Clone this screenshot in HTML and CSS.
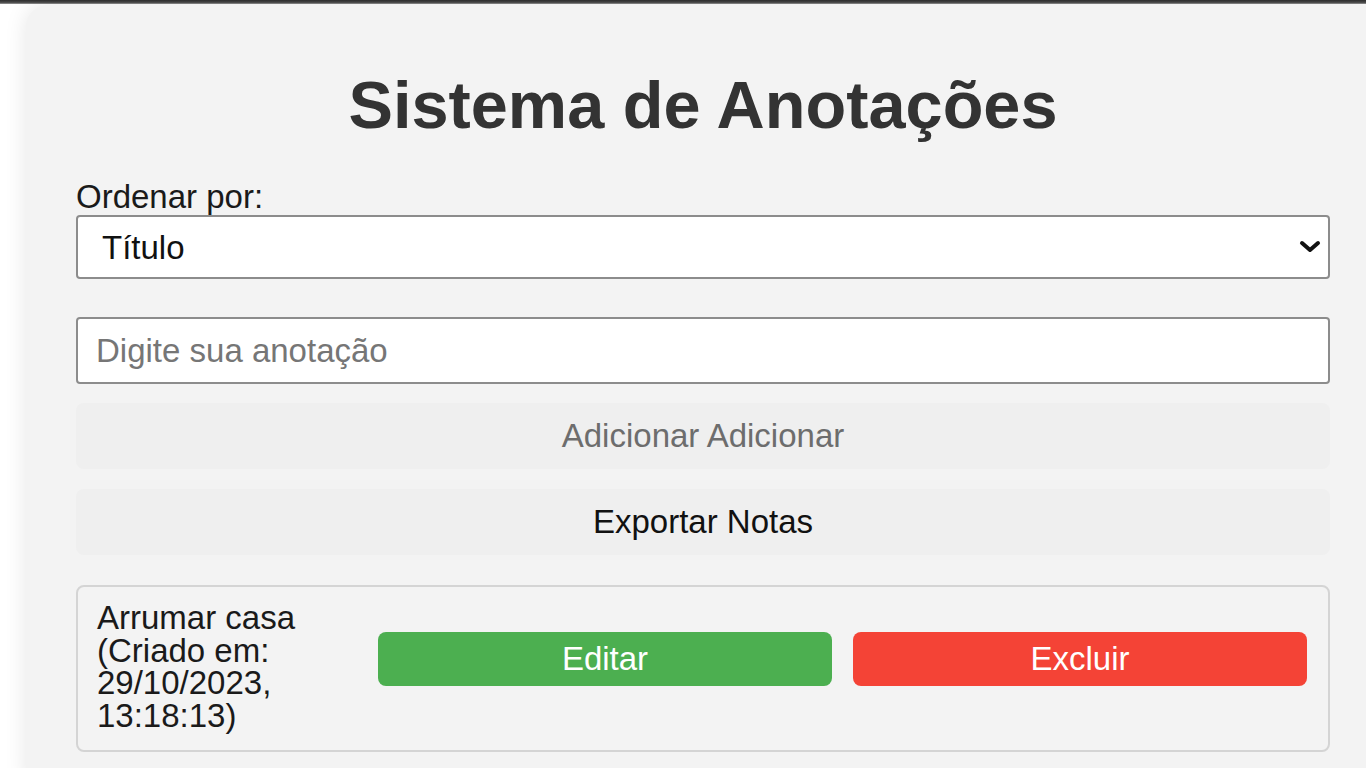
FILE: index.html
```html
<!DOCTYPE html>
<html lang="pt-BR">
<head>
<meta charset="utf-8">
<title>Sistema de Anotações</title>
<link rel="stylesheet" href="styles.css">
</head>
<body>
<div class="topbar"></div>
<main class="container">
  <h1 class="title">Sistema de Anotações</h1>
  <label class="sort-label" for="sort">Ordenar por:</label>
  <div class="select-wrap">
    <select id="sort" class="sort-select">
      <option>Título</option>
      <option>Data</option>
    </select>
    <svg class="chevron" width="22" height="14" viewBox="0 0 22 14"><path d="M3 3 L11 10 L19 3" fill="none" stroke="#111" stroke-width="4" stroke-linecap="round" stroke-linejoin="round"/></svg>
  </div>
  <input class="note-input" type="text" placeholder="Digite sua anotação">
  <button class="btn btn-add" disabled>Adicionar Adicionar</button>
  <button class="btn btn-export">Exportar Notas</button>
  <ul class="notes">
    <li class="note">
      <span class="note-text">Arrumar casa (Criado em: 29/10/2023, 13:18:13)</span>
      <button class="note-btn edit">Editar</button>
      <button class="note-btn delete">Excluir</button>
    </li>
  </ul>
</main>
</body>
</html>
```
FILE: styles.css
```css
html, body {
  margin: 0;
  padding: 0;
  overflow: hidden;
  background: #ffffff;
  font-family: "Liberation Sans", Arial, sans-serif;
}

.topbar {
  height: 4px;
  background: linear-gradient(#2e2e2e, #4a4a4a 60%, #9a9a9a);
}

.container {
  width: 1354px;
  box-sizing: border-box;
  margin: 1px 0 0 26px;
  padding: 21px 50px 40px;
  background: #f3f3f3;
  border-radius: 22px;
  box-shadow: 0 0 22px rgba(0, 0, 0, 0.10);
}

.title {
  margin: 41px 0 36px;
  text-align: center;
  font-size: 66.7px;
  font-weight: bold;
  color: #333333;
  line-height: normal;
}

.sort-label {
  display: block;
  font-size: 33px;
  color: #1a1a1a;
  line-height: 36px;
}

.select-wrap {
  position: relative;
}

.sort-select {
  display: block;
  width: 100%;
  height: 64px;
  box-sizing: border-box;
  margin: 0;
  padding: 0 24px;
  border: 2px solid #8c8c8c;
  border-radius: 4px;
  background: #ffffff;
  font-family: inherit;
  font-size: 33px;
  color: #111111;
  appearance: none;
  -webkit-appearance: none;
}

.chevron {
  position: absolute;
  right: 9px;
  top: 25px;
  pointer-events: none;
}

.note-input {
  display: block;
  width: 100%;
  height: 67px;
  box-sizing: border-box;
  margin: 38px 0 19px;
  padding: 0 18px;
  border: 2px solid #8c8c8c;
  border-radius: 4px;
  background: #ffffff;
  font-family: inherit;
  font-size: 33px;
  color: #111111;
}

.note-input::placeholder {
  color: #767676;
}

.btn {
  display: block;
  width: 100%;
  height: 66px;
  margin: 0 0 20px;
  border: none;
  border-radius: 8px;
  background: #efefef;
  font-family: inherit;
  font-size: 33px;
  color: #111111;
}

.btn-add {
  color: #6d6d6d;
}

.notes {
  list-style: none;
  margin: 30px 0 0;
  padding: 0;
}

.note {
  display: grid;
  grid-template-columns: 1fr 454px 454px;
  column-gap: 21px;
  align-items: center;
  padding: 15px 21px 18px 19px;
  border: 2px solid #d4d4d4;
  border-radius: 8px;
}

.note-text {
  font-size: 33px;
  line-height: 32.5px;
  color: #1a1a1a;
}

.note-btn {
  height: 54px;
  margin-bottom: 17px;
  border: none;
  border-radius: 8px;
  font-family: inherit;
  font-size: 33px;
  color: #ffffff;
}

.edit {
  background: #4caf50;
}

.delete {
  background: #f44336;
}
```
